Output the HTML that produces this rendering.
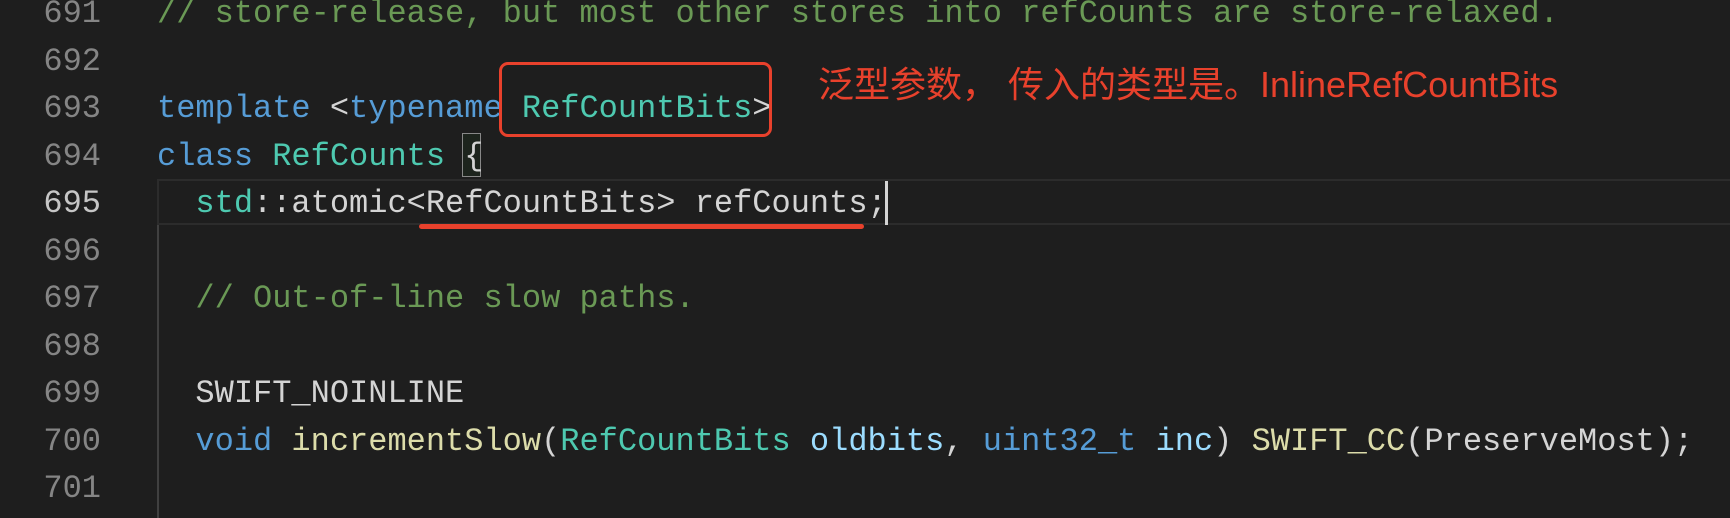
<!DOCTYPE html>
<html><head><meta charset="utf-8"><style>
html,body{margin:0;padding:0;background:#1e1e1e;width:1730px;height:518px;overflow:hidden;position:relative}
.l{position:absolute;left:0;height:47.5px;line-height:47.5px;font-family:"Liberation Mono",monospace;font-size:32px;white-space:pre;color:#d4d4d4}
.n{position:absolute;left:0;width:101px;text-align:right;color:#858585}
.c{position:absolute;left:157px}
.k{color:#569cd6}.t{color:#4ec9b0}.g{color:#6a9955}.f{color:#dcdcaa}.v{color:#9cdcfe}
</style></head><body>
<div style="position:absolute;left:157px;top:179px;width:1600px;height:46px;border:2px solid #2c2c2c;box-sizing:border-box"></div>
<div style="position:absolute;left:157px;top:225px;width:2px;height:293px;background:#404040"></div>
<div style="position:absolute;left:462px;top:133px;width:19px;height:44px;border:1.5px solid #888;box-sizing:border-box;background:#1d241d"></div>
<div style="position:absolute;left:885px;top:181px;width:2.5px;height:44px;background:#d4d4d4"></div>

<div class="l" style="top:-10px"><span class="n">691</span><span class="c g">// store-release, but most other stores into refCounts are store-relaxed.</span></div>
<div class="l" style="top:37.5px"><span class="n">692</span></div>
<div class="l" style="top:85px"><span class="n">693</span><span class="c"><span class="k">template</span> &lt;<span class="k">typename</span> <span class="t">RefCountBits</span>&gt;</span></div>
<div class="l" style="top:132.5px"><span class="n">694</span><span class="c"><span class="k">class</span> <span class="t">RefCounts</span> {</span></div>
<div class="l" style="top:180px"><span class="n" style="color:#c6c6c6">695</span><span class="c">  <span class="t">std</span>::atomic&lt;RefCountBits&gt; refCounts;</span></div>
<div class="l" style="top:227.5px"><span class="n">696</span></div>
<div class="l" style="top:275px"><span class="n">697</span><span class="c g">  // Out-of-line slow paths.</span></div>
<div class="l" style="top:322.5px"><span class="n">698</span></div>
<div class="l" style="top:370px"><span class="n">699</span><span class="c">  SWIFT_NOINLINE</span></div>
<div class="l" style="top:417.5px"><span class="n">700</span><span class="c">  <span class="k">void</span> <span class="f">incrementSlow</span>(<span class="t">RefCountBits</span> <span class="v">oldbits</span>, <span class="k">uint32_t</span> <span class="v">inc</span>) <span class="f">SWIFT_CC</span>(PreserveMost);</span></div>
<div class="l" style="top:465px"><span class="n">701</span></div>

<div style="position:absolute;left:499px;top:62px;width:273px;height:75px;border:3.5px solid #e8412c;border-radius:9px;box-sizing:border-box"></div>
<div style="position:absolute;left:419px;top:224px;width:445px;height:5px;background:#e8412c;border-radius:3px"></div>
<div style="position:absolute;left:818px;top:63px;font-family:'Liberation Sans','Noto Sans CJK SC',sans-serif;font-size:36px;line-height:44px;color:#e8412c;white-space:nowrap">泛型参数， 传入的类型是。InlineRefCountBits</div>
</body></html>
